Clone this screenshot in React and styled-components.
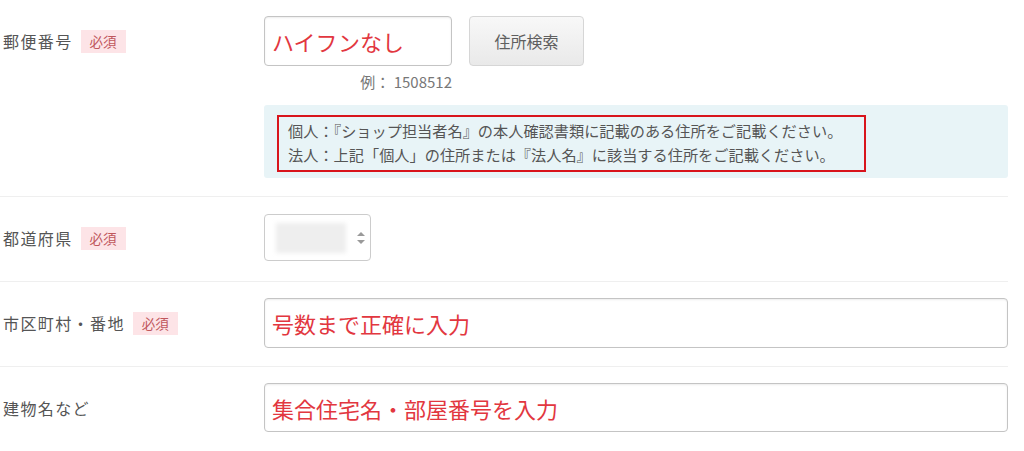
import React from "react";
import styled, { createGlobalStyle } from "styled-components";

const GlobalStyle = createGlobalStyle`
  body {
    margin: 0;
    background: #fff;
    font-family: "Noto Sans CJK JP", "Noto Sans", sans-serif;
    color: #555;
  }
`;

const Form = styled.div`
  width: 1008px;
`;

const Row = styled.div`
  display: flex;
  padding: 16px 0 18px;
  border-bottom: 1px solid #efefef;
`;

const LabelCell = styled.div`
  width: 264px;
  flex-shrink: 0;
  box-sizing: border-box;
  padding-left: 3px;
  min-height: 50px;
  display: flex;
  align-items: center;
  align-self: flex-start;
  gap: 8px;
`;

const LabelText = styled.span`
  font-size: 16px;
  letter-spacing: 1.4px;
  color: #555;
`;

const Required = styled.span`
  display: inline-flex;
  align-items: center;
  justify-content: center;
  width: 45px;
  height: 23px;
  background: #fde4e7;
  color: #c0575c;
  font-size: 13.5px;
`;

const Field = styled.div`
  flex: 1;
  display: flex;
  flex-direction: column;
`;

const ZipLine = styled.div`
  display: flex;
  gap: 17px;
`;

const TextInput = styled.input`
  box-sizing: border-box;
  width: ${(p) => p.$width || "100%"};
  height: ${(p) => p.$height || 50}px;
  border: 1px solid #c4c4c4;
  border-radius: 4px;
  box-shadow: inset 0 1px 2px rgba(0, 0, 0, 0.08);
  padding: 0 7px;
  font-family: "Noto Sans CJK JP", sans-serif;
  font-size: 22px;
  background: #fff;
  outline: none;

  &::placeholder {
    color: #e2373f;
    opacity: 1;
  }
`;

const SearchButton = styled.button`
  width: 115px;
  height: 50px;
  border: 1px solid #d6d6d6;
  border-radius: 4px;
  background: linear-gradient(#f8f8f8, #e9e9e9);
  font-family: "Noto Sans CJK JP", sans-serif;
  font-size: 16px;
  color: #5f5f5f;
  cursor: pointer;
`;

const Example = styled.div`
  width: 188px;
  text-align: right;
  margin-top: 8px;
  line-height: 16px;
  font-size: 15px;
  color: #777;
`;

const InfoBox = styled.div`
  margin-top: 15px;
  height: 73px;
  box-sizing: border-box;
  background: #e8f4f7;
  border-radius: 3px;
  padding: 10px 13px 0;
`;

const Notice = styled.div`
  box-sizing: border-box;
  width: 589px;
  height: 57px;
  border: 2px solid #d8141c;
  padding: 1px 0 0 9px;
  font-size: 15.2px;
  line-height: 24px;
  color: #555;
  white-space: nowrap;
`;

const SelectBox = styled.div`
  box-sizing: border-box;
  width: 107px;
  height: 47px;
  margin: 1px 0 2px;
  border: 1px solid #ccc;
  border-radius: 4px;
  display: flex;
  align-items: center;
  padding: 0 3px 0 11px;
  justify-content: space-between;
`;

const BlurredValue = styled.span`
  width: 70px;
  height: 30px;
  background: #eeeeee;
  filter: blur(2px);
`;

const Arrows = () => (
  <svg width="12" height="18" viewBox="0 0 12 18">
    <path d="M2 7 L6 3 L10 7 Z" fill="#9a9a9a" />
    <path d="M2 11 L6 15 L10 11 Z" fill="#9a9a9a" />
  </svg>
);

const Label = ({ children, required }) => (
  <LabelCell>
    <LabelText>{children}</LabelText>
    {required && <Required>必須</Required>}
  </LabelCell>
);

export default function App() {
  return (
    <>
      <GlobalStyle />
      <Form>
        <Row>
          <Label required>郵便番号</Label>
          <Field>
            <ZipLine>
              <TextInput $width="188px" placeholder="ハイフンなし" />
              <SearchButton>住所検索</SearchButton>
            </ZipLine>
            <Example>例： 1508512</Example>
            <InfoBox>
              <Notice>
                個人：『ショップ担当者名』の本人確認書類に記載のある住所をご記載ください。
                <br />
                法人：上記「個人」の住所または『法人名』に該当する住所をご記載ください。
              </Notice>
            </InfoBox>
          </Field>
        </Row>
        <Row>
          <Label required>都道府県</Label>
          <Field>
            <SelectBox>
              <BlurredValue />
              <Arrows />
            </SelectBox>
          </Field>
        </Row>
        <Row>
          <Label required>市区町村・番地</Label>
          <Field>
            <TextInput placeholder="号数まで正確に入力" />
          </Field>
        </Row>
        <Row>
          <Label>建物名など</Label>
          <Field>
            <TextInput $height={49} placeholder="集合住宅名・部屋番号を入力" />
          </Field>
        </Row>
      </Form>
    </>
  );
}
